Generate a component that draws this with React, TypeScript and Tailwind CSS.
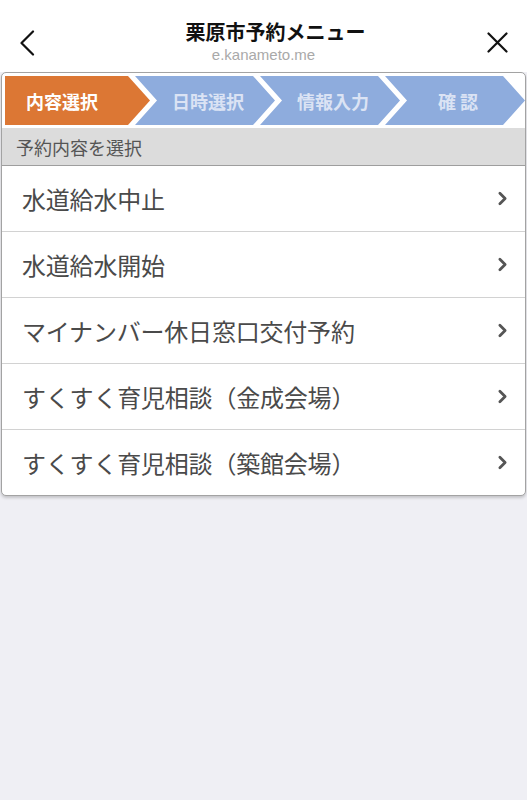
import { ChevronRight } from "lucide-react";

const steps = [
  { label: "内容選択", active: true },
  { label: "日時選択", active: false },
  { label: "情報入力", active: false },
  { label: "確 認", active: false },
];

const items = [
  "水道給水中止",
  "水道給水開始",
  "マイナンバー休日窓口交付予約",
  "すくすく育児相談（金成会場）",
  "すくすく育児相談（築館会場）",
];

const jp = { fontFamily: '"Noto Sans CJK JP", "Noto Sans", sans-serif' };

const StepBar = () => (
  <div className="flex h-[49px] pl-[3px]">
    {steps.map((s, i) => (
      <div
        key={s.label}
        className={
          i === 0
            ? "flex-1 flex items-center justify-center pr-[31px] bg-[#dc7734] [clip-path:polygon(0_0,calc(100%_-_22px)_0,100%_50%,calc(100%_-_22px)_100%,0_100%)]"
            : "flex-1 -ml-[15px] flex items-center justify-center pl-[16px] pr-[10px] bg-[#8eacdd] [clip-path:polygon(0_0,calc(100%_-_22px)_0,100%_50%,calc(100%_-_22px)_100%,0_100%,22px_50%)]"
        }
      >
        <span
          className={
            s.active
              ? "text-white text-[18px] font-bold leading-none whitespace-pre"
              : "text-[#dbe3f4] text-[18px] font-bold leading-none whitespace-pre"
          }
        >
          {s.label}
        </span>
      </div>
    ))}
  </div>
);

const App = () => {
  return (
    <div className="min-h-[800px] bg-[#efeff4]" style={jp}>
      {/* header */}
      <div className="h-[72px] bg-white flex items-start">
        <button className="w-[60px] h-[72px] flex items-start pt-[30px] pl-[19px]">
          <svg width="16" height="26" viewBox="0 0 16 26" fill="none">
            <path d="M14 1.5 L2.5 13 L14 24.5" stroke="#111" strokeWidth="2.2" strokeLinecap="round" strokeLinejoin="round" />
          </svg>
        </button>
        <div className="flex-1 flex flex-col items-center pt-[20px]">
          <div className="text-[20px] leading-[24px] font-bold text-[#111] pl-[24px]">栗原市予約メニュー</div>
          <div
            className="text-[15px] leading-[18px] mt-[2px] text-[#a9a9a9]"
            style={{ fontFamily: '"Liberation Sans", Arial, sans-serif' }}
          >
            e.kanameto.me
          </div>
        </div>
        <button className="w-[60px] h-[72px] flex items-start justify-end pt-[32px] pr-[19px]">
          <svg width="21" height="21" viewBox="0 0 21 21" fill="none">
            <path d="M1.5 1.5 L19.5 19.5 M19.5 1.5 L1.5 19.5" stroke="#111" strokeWidth="2.2" strokeLinecap="round" />
          </svg>
        </button>
      </div>

      {/* card */}
      <div className="mx-[1px] bg-white border border-[#a3a3a3] rounded-[5px] overflow-hidden shadow-[0_2px_3px_rgba(0,0,0,0.18)]">
        <div className="pt-[3px] pb-[3px]">
          <StepBar />
        </div>
        <div className="h-[38px] bg-[#dcdcdc] border-b border-[#9e9e9e] flex items-center pl-[14px]">
          <span className="text-[18px] leading-none text-[#555]">予約内容を選択</span>
        </div>
        {items.map((label, i) => (
          <div
            key={label}
            className={
              i < items.length - 1
                ? "h-[66px] border-b border-[#d2d2d2] flex items-center justify-between pl-[20px] pr-[12px]"
                : "h-[65px] flex items-center justify-between pl-[20px] pr-[12px]"
            }
          >
            <span className="text-[24px] leading-none text-[#4a4a4a] tracking-[-0.2px]">{label}</span>
            <ChevronRight size={21} strokeWidth={3.2} color="#555" />
          </div>
        ))}
      </div>
    </div>
  );
};

export default App;
